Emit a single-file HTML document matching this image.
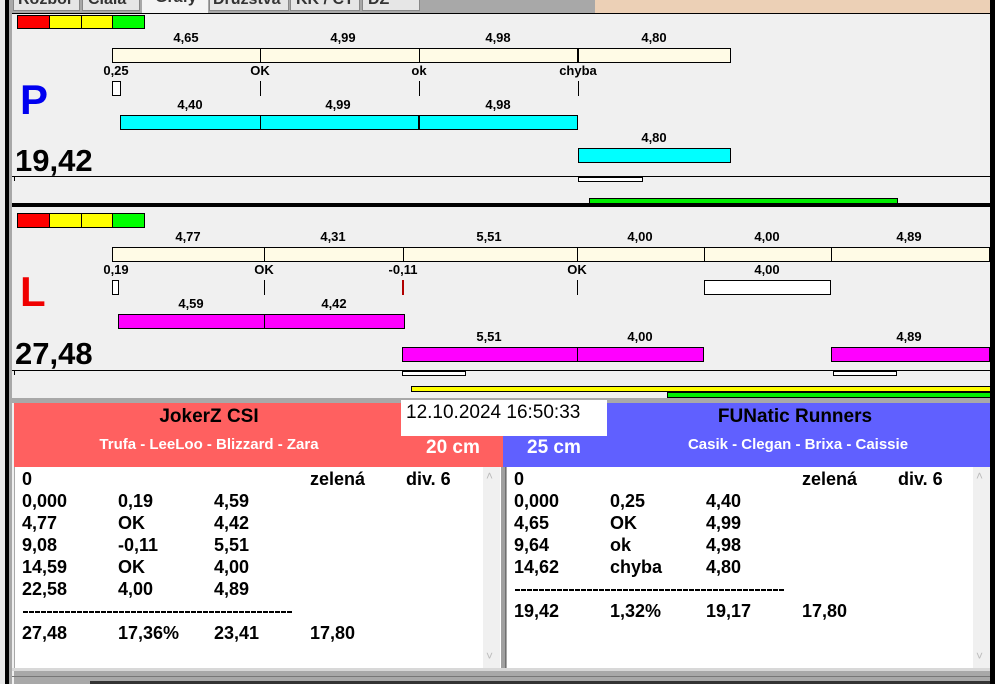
<!DOCTYPE html>
<html><head><meta charset="utf-8"><style>
*{margin:0;padding:0;box-sizing:border-box}
body{width:995px;height:684px;position:relative;overflow:hidden;background:#f0f0f0;font-family:"Liberation Sans",Arial,sans-serif}
div{position:absolute}
.l{font-size:13px;font-weight:bold;color:#000;width:100px;text-align:center;line-height:14px}
.bx{border:1px solid #000}
.cr{background:#fffbe6}
.cy{background:#00ffff}
.mg{background:#ff00ff}
.vl{width:1px;background:#000}
.t{font-size:18px;font-weight:bold;line-height:22px;white-space:nowrap}
.dash{height:2px;background:repeating-linear-gradient(90deg,#000 0 5px,transparent 5px 6px)}
</style></head><body>
<div style="left:0;top:0;width:5px;height:684px;background:#e8e8e8"></div>
<div style="left:5px;top:0;width:4px;height:684px;background:#000"></div>
<div style="left:9px;top:0;width:3px;height:684px;background:#a8a8a8"></div>
<div style="left:990px;top:0;width:5px;height:684px;background:#000"></div>
<div style="left:12px;top:0;width:420px;height:13px;background:#a8a8a8"></div>
<div style="left:432px;top:0;width:163px;height:13px;background:#a8a8a8"></div>
<div style="left:595px;top:0;width:395px;height:13px;background:#ecd0b6"></div>
<div style="left:13px;top:0;width:67px;height:11px;background:#e6e6e6;border:1px solid #888;border-top:none"></div>
<div style="left:82px;top:0;width:58px;height:11px;background:#e6e6e6;border:1px solid #888;border-top:none"></div>
<div style="left:142px;top:0;width:66px;height:13px;background:#f4f4f4"></div>
<div style="left:209px;top:0;width:80px;height:11px;background:#e6e6e6;border:1px solid #888;border-top:none"></div>
<div style="left:290px;top:0;width:70px;height:11px;background:#e6e6e6;border:1px solid #888;border-top:none"></div>
<div style="left:362px;top:0;width:58px;height:11px;background:#e6e6e6;border:1px solid #888;border-top:none"></div>
<div style="left:18px;top:-9px;font-size:16px;font-weight:bold;color:#333">Rozbor</div>
<div style="left:88px;top:-9px;font-size:16px;font-weight:bold;color:#333">Cíaia</div>
<div style="left:155px;top:-11px;font-size:16px;font-weight:bold;color:#333">Grafy</div>
<div style="left:213px;top:-9px;font-size:16px;font-weight:bold;color:#333">Družstva</div>
<div style="left:296px;top:-9px;font-size:16px;font-weight:bold;color:#333">KK / CT</div>
<div style="left:368px;top:-9px;font-size:16px;font-weight:bold;color:#333">DZ</div>
<div style="left:12px;top:13px;width:978px;height:1px;background:#000"></div>

<div style="left:17px;top:15px;width:33px;height:14px;background:#f00" class="bx"></div>
<div style="left:49px;top:15px;width:33px;height:14px;background:#ff0" class="bx"></div>
<div style="left:81px;top:15px;width:32px;height:14px;background:#ff0" class="bx"></div>
<div style="left:112px;top:15px;width:33px;height:14px;background:#0f0" class="bx"></div>

<div class="l" style="left:136px;top:31px">4,65</div>
<div class="l" style="left:293px;top:31px">4,99</div>
<div class="l" style="left:448px;top:31px">4,98</div>
<div class="l" style="left:604px;top:31px">4,80</div>
<div class="bx cr" style="left:112px;top:48px;width:619px;height:15px"></div>
<div class="vl" style="left:260px;top:48px;height:15px"></div>
<div class="vl" style="left:419px;top:48px;height:15px"></div>
<div class="vl" style="left:577px;top:48px;height:15px;width:2px"></div>
<div class="l" style="left:66px;top:64px">0,25</div>
<div class="l" style="left:210px;top:64px">OK</div>
<div class="l" style="left:369px;top:64px">ok</div>
<div class="l" style="left:528px;top:64px">chyba</div>
<div class="bx" style="left:112px;top:81px;width:9px;height:15px;background:#fff"></div>
<div class="vl" style="left:260px;top:81px;height:15px"></div>
<div class="vl" style="left:419px;top:81px;height:15px"></div>
<div class="vl" style="left:578px;top:81px;height:15px"></div>
<div style="left:20px;top:76px;font-size:42px;font-weight:bold;color:#0000f0">P</div>
<div class="l" style="left:140px;top:98px">4,40</div>
<div class="l" style="left:288px;top:98px">4,99</div>
<div class="l" style="left:448px;top:98px">4,98</div>
<div class="bx cy" style="left:120px;top:115px;width:458px;height:15px"></div>
<div class="vl" style="left:260px;top:115px;height:15px"></div>
<div class="vl" style="left:418px;top:115px;height:15px;width:2px"></div>
<div class="l" style="left:604px;top:131px">4,80</div>
<div class="bx cy" style="left:578px;top:148px;width:153px;height:15px"></div>
<div style="left:15px;top:143px;font-size:31px;font-weight:bold">19,42</div>
<div style="left:12px;top:176px;width:978px;height:1px;background:#000"></div>
<div class="vl" style="left:14px;top:177px;height:4px"></div>
<div class="bx" style="left:578px;top:177px;width:65px;height:5px;background:#fff"></div>
<div class="bx" style="left:589px;top:198px;width:309px;height:6px;background:#0e0"></div>
<div style="left:12px;top:203px;width:978px;height:4px;background:#000"></div>

<div style="left:17px;top:213px;width:33px;height:15px;background:#f00" class="bx"></div>
<div style="left:49px;top:213px;width:33px;height:15px;background:#ff0" class="bx"></div>
<div style="left:81px;top:213px;width:32px;height:15px;background:#ff0" class="bx"></div>
<div style="left:112px;top:213px;width:33px;height:15px;background:#0f0" class="bx"></div>
<div class="l" style="left:138px;top:230px">4,77</div>
<div class="l" style="left:283px;top:230px">4,31</div>
<div class="l" style="left:439px;top:230px">5,51</div>
<div class="l" style="left:590px;top:230px">4,00</div>
<div class="l" style="left:717px;top:230px">4,00</div>
<div class="l" style="left:859px;top:230px">4,89</div>
<div class="bx cr" style="left:112px;top:247px;width:878px;height:15px"></div>
<div class="vl" style="left:264px;top:247px;height:15px"></div>
<div class="vl" style="left:403px;top:247px;height:15px"></div>
<div class="vl" style="left:577px;top:247px;height:15px"></div>
<div class="vl" style="left:704px;top:247px;height:15px"></div>
<div class="vl" style="left:831px;top:247px;height:15px"></div>
<div class="l" style="left:66px;top:263px">0,19</div>
<div class="l" style="left:214px;top:263px">OK</div>
<div class="l" style="left:353px;top:263px">-0,11</div>
<div class="l" style="left:527px;top:263px">OK</div>
<div class="l" style="left:717px;top:263px">4,00</div>
<div class="bx" style="left:112px;top:280px;width:7px;height:15px;background:#fff"></div>
<div class="vl" style="left:264px;top:280px;height:15px"></div>
<div style="left:402px;top:280px;width:2px;height:15px;background:#b00000"></div>
<div class="vl" style="left:577px;top:280px;height:15px"></div>
<div class="bx" style="left:704px;top:280px;width:127px;height:15px;background:#fff"></div>
<div style="left:20px;top:268px;font-size:42px;font-weight:bold;color:#f00000">L</div>
<div class="l" style="left:141px;top:297px">4,59</div>
<div class="l" style="left:284px;top:297px">4,42</div>
<div class="bx mg" style="left:118px;top:314px;width:287px;height:15px"></div>
<div class="vl" style="left:264px;top:314px;height:15px"></div>
<div class="l" style="left:439px;top:330px">5,51</div>
<div class="l" style="left:590px;top:330px">4,00</div>
<div class="l" style="left:859px;top:330px">4,89</div>
<div class="bx mg" style="left:402px;top:347px;width:302px;height:15px"></div>
<div class="vl" style="left:577px;top:347px;height:15px"></div>
<div class="bx mg" style="left:831px;top:347px;width:159px;height:15px"></div>
<div style="left:15px;top:336px;font-size:31px;font-weight:bold">27,48</div>
<div style="left:12px;top:370px;width:978px;height:1px;background:#000"></div>
<div class="vl" style="left:14px;top:371px;height:4px"></div>
<div class="bx" style="left:402px;top:371px;width:64px;height:5px;background:#fff"></div>
<div class="bx" style="left:833px;top:371px;width:64px;height:5px;background:#fff"></div>
<div class="bx" style="left:411px;top:386px;width:580px;height:6px;background:#ff0"></div>
<div class="bx" style="left:667px;top:392px;width:324px;height:6px;background:#0e0"></div>
<div style="left:12px;top:398px;width:978px;height:5px;background:#a8a8a8"></div>

<div style="left:14px;top:403px;width:489px;height:64px;background:#ff6060"></div>
<div style="left:503px;top:403px;width:487px;height:64px;background:#6060ff"></div>
<div style="left:14px;top:405px;width:390px;text-align:center;font-size:19px;font-weight:bold;line-height:24px">JokerZ CSI</div>
<div style="left:14px;top:435px;width:390px;text-align:center;font-size:15px;font-weight:bold;color:#fff;line-height:20px">Trufa - LeeLoo - Blizzard - Zara</div>
<div style="left:426px;top:436px;font-size:19px;font-weight:bold;color:#fff;line-height:24px">20 cm</div>
<div style="left:527px;top:436px;font-size:19px;font-weight:bold;color:#fff;line-height:24px">25 cm</div>
<div style="left:600px;top:405px;width:390px;text-align:center;font-size:19px;font-weight:bold;line-height:24px">FUNatic Runners</div>
<div style="left:603px;top:435px;width:390px;text-align:center;font-size:15px;font-weight:bold;color:#fff;line-height:20px">Casik - Clegan - Brixa - Caissie</div>
<div style="left:401px;top:400px;width:206px;height:36px;background:#fff;font-size:19px;line-height:24px;padding:1px 0 0 5px">12.10.2024 16:50:33</div>

<div style="left:14px;top:467px;width:976px;height:217px;background:#a8a8a8"></div>
<div style="left:15px;top:467px;width:486px;height:202px;background:#fff"></div>
<div style="left:483px;top:467px;width:17px;height:202px;background:#f0f0f0;color:#bbb;font-size:12px;text-align:center"><span style="position:absolute;left:3px;top:2px">˄</span><span style="position:absolute;left:3px;top:182px">˅</span></div>
<div style="left:501px;top:467px;width:5px;height:202px;background:#a0a0a0;border-right:1px solid #707070"></div>
<div style="left:507px;top:467px;width:483px;height:202px;background:#fff"></div>
<div style="left:973px;top:467px;width:17px;height:202px;background:#f0f0f0;color:#bbb;font-size:12px"><span style="position:absolute;left:3px;top:2px">˄</span><span style="position:absolute;left:3px;top:182px">˅</span></div>
<div style="left:12px;top:668px;width:978px;height:3px;background:#d8d8d8"></div>
<div style="left:12px;top:676px;width:978px;height:1px;background:#777"></div>
<div style="left:90px;top:681px;width:900px;height:3px;background:#333"></div>

<div class="t" style="left:22px;top:468px">0</div>
<div class="t" style="left:310px;top:468px">zelená</div>
<div class="t" style="left:406px;top:468px">div. 6</div>
<div class="t" style="left:22px;top:490px">0,000<br>4,77<br>9,08<br>14,59<br>22,58</div>
<div class="t" style="left:118px;top:490px">0,19<br>OK<br>-0,11<br>OK<br>4,00</div>
<div class="t" style="left:214px;top:490px">4,59<br>4,42<br>5,51<br>4,00<br>4,89</div>
<div class="dash" style="left:23px;top:611px;width:270px"></div>
<div class="t" style="left:22px;top:622px">27,48</div>
<div class="t" style="left:118px;top:622px">17,36%</div>
<div class="t" style="left:214px;top:622px">23,41</div>
<div class="t" style="left:310px;top:622px">17,80</div>

<div class="t" style="left:514px;top:468px">0</div>
<div class="t" style="left:802px;top:468px">zelená</div>
<div class="t" style="left:898px;top:468px">div. 6</div>
<div class="t" style="left:514px;top:490px">0,000<br>4,65<br>9,64<br>14,62</div>
<div class="t" style="left:610px;top:490px">0,25<br>OK<br>ok<br>chyba</div>
<div class="t" style="left:706px;top:490px">4,40<br>4,99<br>4,98<br>4,80</div>
<div class="dash" style="left:515px;top:589px;width:270px"></div>
<div class="t" style="left:514px;top:600px">19,42</div>
<div class="t" style="left:610px;top:600px">1,32%</div>
<div class="t" style="left:706px;top:600px">19,17</div>
<div class="t" style="left:802px;top:600px">17,80</div>
</body></html>
